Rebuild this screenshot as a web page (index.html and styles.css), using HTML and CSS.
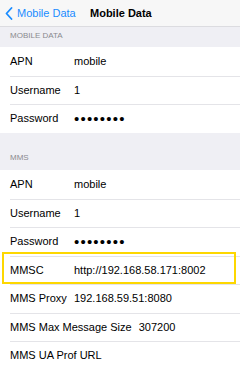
FILE: index.html
```html
<!DOCTYPE html>
<html lang="en">
<head>
  <meta charset="UTF-8" />
  <meta name="viewport" content="width=device-width, initial-scale=1.0"/>
  <title>Mobile Data</title>
  <link rel="stylesheet" href="styles.css">
</head>
<body>

  <div class="navbar">
    <div class="back">
      <svg width="8" height="13" viewBox="0 0 8 13"><path d="M6.5 1 L1.5 6.5 L6.5 12" fill="none" stroke="#1a8cff" stroke-width="1.8" stroke-linecap="round" stroke-linejoin="round"/></svg>
      Mobile Data
    </div>
    <div class="title">Mobile Data</div>
  </div>

  <!-- Mobile data group -->
  <div class="section-header first">MOBILE DATA</div>
  <div class="group">
    <div class="row"><span class="label">APN</span><span class="value">mobile</span></div>
    <div class="row"><span class="label">Username</span><span class="value">1</span></div>
    <div class="row"><span class="label">Password</span><span class="value dots">••••••••</span></div>
  </div>

  <!-- MMS group -->
  <div class="section-header">MMS</div>
  <div class="group">
    <div class="row"><span class="label">APN</span><span class="value">mobile</span></div>
    <div class="row"><span class="label">Username</span><span class="value">1</span></div>
    <div class="row"><span class="label">Password</span><span class="value dots">••••••••</span></div>
    <div class="row highlight"><span class="label">MMSC</span><span class="value">http://192.168.58.171:8002</span></div>
    <div class="row"><span class="label">MMS Proxy</span><span class="value">192.168.59.51:8080</span></div>
    <div class="row"><span class="label">MMS Max Message Size</span><span class="value">307200</span></div>
    <div class="row"><span class="label">MMS UA Prof URL</span><span class="value"></span></div>
  </div>

</body>
</html>
```

FILE: styles.css
```css
* { margin: 0; padding: 0; box-sizing: border-box; font-family: 'Liberation Sans', Arial, sans-serif; }
body { background-color: #efeff4; width: 240px; overflow: hidden; }
.navbar {
  height: 27px;
  background-color: #f7f7f7;
  border-bottom: 1px solid #dcdce0;
  display: flex;
  align-items: center;
  padding-left: 5px;
}
.back { display: flex; align-items: center; gap: 4px; color: #1a8cff; font-size: 11px; width: 85px; }
.back svg { display: block; }
.title { font-size: 11px; font-weight: bold; color: #000; }
.section-header {
  font-size: 8px;
  line-height: 10px;
  color: #8a8a8f;
  padding: 20px 10px 7.5px;
}
.section-header.first { padding: 4px 10px 6px; }
.group { background-color: #fff; }
.row {
  position: relative;
  height: 28.5px;
  display: flex;
  align-items: center;
  padding-left: 10px;
  font-size: 11px;
  color: #000;
}
.row + .row::before {
  content: "";
  position: absolute;
  top: 0;
  left: 10px;
  right: 0;
  border-top: 1px solid #e4e4e8;
}
.label { min-width: 57px; margin-right: 7px; white-space: nowrap; }
.value { white-space: nowrap; }
.dots { font-size: 15px; letter-spacing: 1.2px; }
.row.highlight::after {
  content: "";
  position: absolute;
  top: -4px;
  bottom: 0;
  left: 2px;
  right: 4px;
  border: 2px solid #fdd700;
}
```
